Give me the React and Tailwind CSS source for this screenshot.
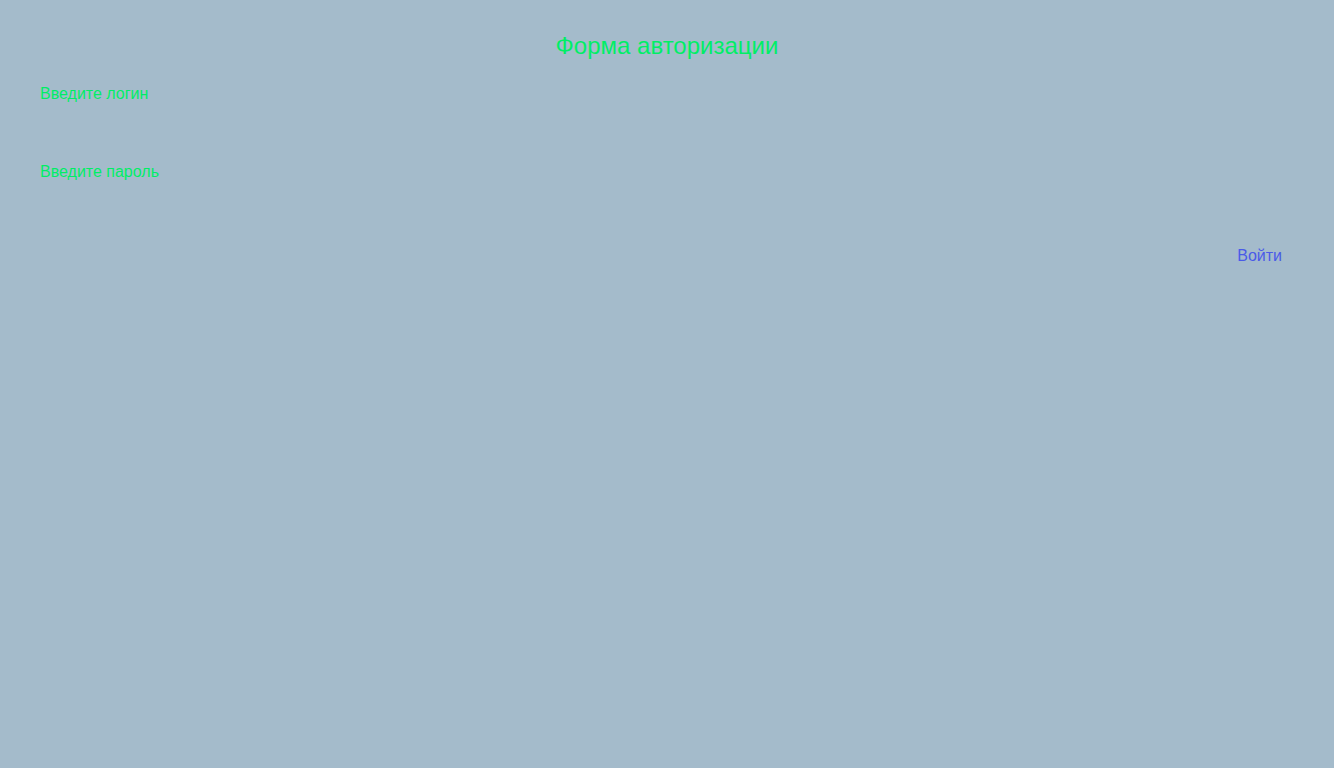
export default function App() {
  return (
    <div className="min-h-screen bg-[#a4bbcb] px-10 pt-[30px]" style={{ fontFamily: '"Liberation Sans", Arial, sans-serif' }}>
      <h1 className="text-center text-2xl text-[#00ee66]">Форма авторизации</h1>
      <form className="mt-[20px] flex flex-col" onSubmit={(e) => e.preventDefault()}>
        <label className="text-base text-[#00ee66]">Введите логин</label>
        <input type="text" className="h-[54px] bg-transparent outline-none" />
        <label className="text-base text-[#00ee66]">Введите пароль</label>
        <input type="password" className="h-[60px] bg-transparent outline-none" />
        <div className="flex justify-end pr-3">
          <button type="submit" className="text-base text-[#4a5ae8]">Войти</button>
        </div>
      </form>
    </div>
  );
}
